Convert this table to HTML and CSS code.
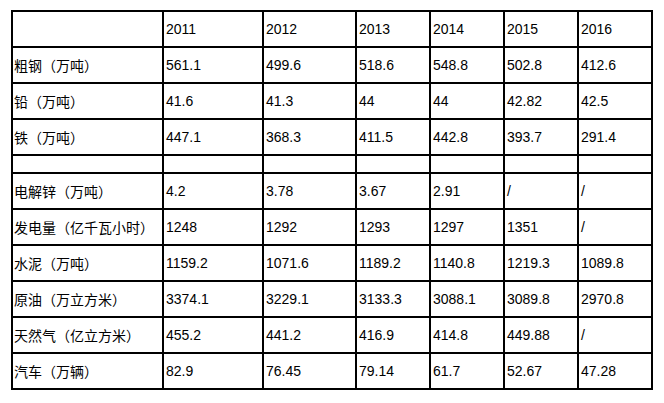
FILE: index.html
```html
<!DOCTYPE html>
<html>
<head>
    <title>产量统计</title>
    <link rel="stylesheet" href="styles.css">
</head>
<body>
    <table class="stats">
        <colgroup>
            <col class="col-name">
            <col class="col-a">
            <col class="col-b">
            <col class="col-y">
            <col class="col-y">
            <col class="col-y">
            <col class="col-y">
        </colgroup>
        <tr>
            <td class="name"></td>
            <td>2011</td><td>2012</td><td>2013</td><td>2014</td><td>2015</td><td>2016</td>
        </tr>
        <tr>
            <td class="name">粗钢（万吨）</td>
            <td>561.1</td><td>499.6</td><td>518.6</td><td>548.8</td><td>502.8</td><td>412.6</td>
        </tr>
        <tr>
            <td class="name">铅（万吨）</td>
            <td>41.6</td><td>41.3</td><td>44</td><td>44</td><td>42.82</td><td>42.5</td>
        </tr>
        <tr>
            <td class="name">铁（万吨）</td>
            <td>447.1</td><td>368.3</td><td>411.5</td><td>442.8</td><td>393.7</td><td>291.4</td>
        </tr>
        <tr class="blank">
            <td></td><td></td><td></td><td></td><td></td><td></td><td></td>
        </tr>
        <tr>
            <td class="name">电解锌（万吨）</td>
            <td>4.2</td><td>3.78</td><td>3.67</td><td>2.91</td><td>/</td><td>/</td>
        </tr>
        <tr>
            <td class="name">发电量（亿千瓦小时）</td>
            <td>1248</td><td>1292</td><td>1293</td><td>1297</td><td>1351</td><td>/</td>
        </tr>
        <tr>
            <td class="name">水泥（万吨）</td>
            <td>1159.2</td><td>1071.6</td><td>1189.2</td><td>1140.8</td><td>1219.3</td><td>1089.8</td>
        </tr>
        <tr>
            <td class="name">原油（万立方米）</td>
            <td>3374.1</td><td>3229.1</td><td>3133.3</td><td>3088.1</td><td>3089.8</td><td>2970.8</td>
        </tr>
        <tr>
            <td class="name">天然气（亿立方米）</td>
            <td>455.2</td><td>441.2</td><td>416.9</td><td>414.8</td><td>449.88</td><td>/</td>
        </tr>
        <tr>
            <td class="name">汽车（万辆）</td>
            <td>82.9</td><td>76.45</td><td>79.14</td><td>61.7</td><td>52.67</td><td>47.28</td>
        </tr>
    </table>
</body>
</html>
```

FILE: styles.css
```css
body {
    margin: 10px 0 0 11px;
    background-color: #fff;
    color: #000;
    font-family: "Liberation Sans", "Noto Sans CJK SC", sans-serif;
    font-size: 14px;
}
.stats {
    border-collapse: collapse;
    table-layout: fixed;
    width: 641px;
}
.col-name {
    width: 151px;
}
.col-a {
    width: 100px;
}
.col-b {
    width: 93px;
}
.col-y {
    width: 74px;
}
.stats tr {
    height: 36px;
}
.stats tr.blank {
    height: 18px;
}
.stats td {
    border: 2px solid #000;
    padding: 0 0 0 2px;
    vertical-align: middle;
    white-space: nowrap;
    overflow: hidden;
}
.stats td.name {
    padding-left: 1px;
    font-size: 14px;
}
```
